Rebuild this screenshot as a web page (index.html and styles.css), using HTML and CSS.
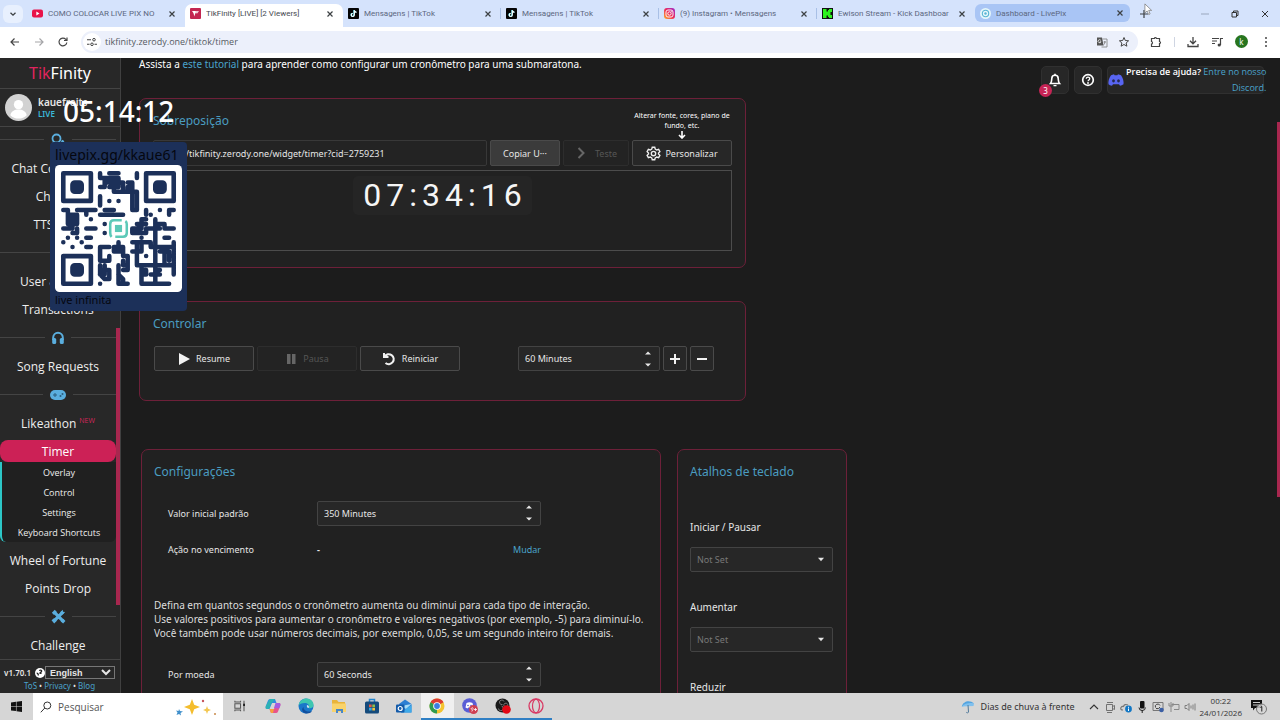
FILE: index.html
```html
<!DOCTYPE html>
<html lang="pt-BR">
<head>
<meta charset="utf-8">
<title>TikFinity [LIVE] [2 Viewers]</title>
<link rel="stylesheet" href="styles.css">
</head>
<body>
<svg class="defs" aria-hidden="true">
  <symbol id="x" viewBox="0 0 8 8"><path d="M1.500 1.500l5 5M6.500 1.500l-5 5" stroke="currentColor" stroke-width="1.200" fill="none"/></symbol>
  <symbol id="tiktok" viewBox="0 0 11 11"><rect width="11" height="11" rx="1" fill="#050505"/><path d="M6 2v4.800a1.500 1.500 0 1 1-1.500-1.500M6 2.200c.3 1.300 1 1.800 2.200 1.900" stroke="#5ef" stroke-width="1.300" fill="none"/><path d="M6.300 2.200v4.800a1.500 1.500 0 1 1-1.500-1.500M6.300 2.400c.3 1.300 1 1.800 2.200 1.900" stroke="#fff" stroke-width="1.200" fill="none"/></symbol>
  <symbol id="spin" viewBox="0 0 6 16"><path d="M0 3.500L3 .5l3 3zM0 12.500l3 3 3-3z" fill="currentColor"/></symbol>
  <symbol id="caret" viewBox="0 0 8 5"><path d="M1 .8h6L4 4.200z" fill="currentColor"/></symbol>
</svg>

<div class="tabstrip">
  <button class="tab-search" aria-label="Pesquisar guias"><svg viewBox="0 0 8 8" width="8" height="8"><path d="M1.500 2.800L4 5.200l2.500-2.400" fill="none" stroke="currentColor" stroke-width="1.300"/></svg></button>
  <div class="tabs">
    <div class="tab"><svg class="fav" viewBox="0 0 11 11"><rect y="1.500" width="11" height="8" rx="2" fill="#e8134a"/><path d="M4.300 3.600v3.800l3.200-1.900z" fill="#fff"/></svg><span class="tab-title">COMO COLOCAR LIVE PIX NO</span><button class="close" aria-label="Fechar"><svg><use href="#x"/></svg></button></div>
    <div class="tab active"><svg class="fav" viewBox="0 0 11 11"><rect width="11" height="11" rx="1" fill="#c32651"/><path d="M2 3h7L7.500 5.200H5.200L4.500 8.500 3.400 5z" fill="#fff"/><path d="M5.500 4h3.800" stroke="#c32651" stroke-width=".5"/></svg><span class="tab-title">TikFinity [LIVE] [2 Viewers]</span><button class="close" aria-label="Fechar"><svg><use href="#x"/></svg></button></div>
    <div class="tab"><svg class="fav"><use href="#tiktok"/></svg><span class="tab-title">Mensagens | TikTok</span><button class="close" aria-label="Fechar"><svg><use href="#x"/></svg></button></div>
    <div class="tab sep"><svg class="fav"><use href="#tiktok"/></svg><span class="tab-title">Mensagens | TikTok</span><button class="close" aria-label="Fechar"><svg><use href="#x"/></svg></button></div>
    <div class="tab sep"><svg class="fav" viewBox="0 0 11 11"><defs><linearGradient id="ig" x1="0" y1="1" x2="1" y2="0"><stop offset="0" stop-color="#fdb12c"/><stop offset=".5" stop-color="#ec2a5a"/><stop offset="1" stop-color="#9a2bd0"/></linearGradient></defs><rect width="11" height="11" rx="3" fill="url(#ig)"/><rect x="2" y="2" width="7" height="7" rx="2" fill="none" stroke="#fff" stroke-width=".9"/><circle cx="5.500" cy="5.500" r="1.700" fill="none" stroke="#fff" stroke-width=".9"/><circle cx="7.700" cy="3.300" r=".5" fill="#fff"/></svg><span class="tab-title">(9) Instagram • Mensagens</span><button class="close" aria-label="Fechar"><svg><use href="#x"/></svg></button></div>
    <div class="tab sep"><svg class="fav" viewBox="0 0 11 11"><rect width="11" height="11" fill="#111"/><path d="M1 1h3.500v2.500H6V2h1V1h3v3H8.500v3H10v3H7V9H6V7.500H4.500V10H1z" fill="#2df21f"/></svg><span class="tab-title">Ewison Stream - Kick Dashboar</span><button class="close" aria-label="Fechar"><svg><use href="#x"/></svg></button></div>
    <div class="tab hover"><svg class="fav" viewBox="0 0 11 11"><circle cx="5.500" cy="5.500" r="5.500" fill="#e5f6fb"/><circle cx="5.500" cy="5.500" r="3.200" fill="none" stroke="#58b5d4" stroke-width="1.100"/><circle cx="5.500" cy="5.500" r="1.200" fill="#58b5d4"/></svg><span class="tab-title">Dashboard - LivePix</span><button class="close" aria-label="Fechar"><svg><use href="#x"/></svg></button></div>
  </div>
  <button class="newtab" aria-label="Nova guia"><svg viewBox="0 0 10 10" width="10" height="10"><path d="M5 1v8M1 5h8" stroke="currentColor" stroke-width="1.200"/></svg></button>
  <div class="winctl">
    <button aria-label="Minimizar"><svg viewBox="0 0 8 8" width="8" height="8"><path d="M0 4h8" stroke="#9aa7bd"/></svg></button>
    <button aria-label="Restaurar"><svg viewBox="0 0 8 8" width="8" height="8"><path d="M1 2.500h4.500V7H1zM2.500 2.500V1H7v4.500H5.500" fill="none" stroke="#333" stroke-width="1"/></svg></button>
    <button aria-label="Fechar janela"><svg viewBox="0 0 8 8" width="8" height="8"><path d="M1 1l6 6M7 1L1 7" stroke="#333" stroke-width="1"/></svg></button>
  </div>
</div>

<div class="toolbar">
  <button class="tb" aria-label="Voltar"><svg viewBox="0 0 12 12"><path d="M10 6H2.500M5.500 2.500L2 6l3.500 3.500" fill="none" stroke="#444" stroke-width="1.200"/></svg></button>
  <button class="tb" aria-label="Avançar"><svg viewBox="0 0 12 12"><path d="M2 6h7.500M6.500 2.500L10 6 6.500 9.500" fill="none" stroke="#a5a5a8" stroke-width="1.200"/></svg></button>
  <button class="tb" aria-label="Recarregar"><svg viewBox="0 0 12 12"><path d="M9.800 6.500A3.900 3.900 0 1 1 8.800 3.300L10 4.500M10 1.500v3H7" fill="none" stroke="#444" stroke-width="1.200"/></svg></button>
  <div class="omnibox">
    <span class="site"><svg viewBox="0 0 10 10" width="10" height="10"><path d="M0 2.700h4M7.500 7.300H10M0 7.300h2.500" stroke="#444" stroke-width="1.100"/><circle cx="7" cy="2.700" r="1.300" fill="none" stroke="#444"/><circle cx="5" cy="7.300" r="1.300" fill="none" stroke="#444"/></svg></span>
    <input class="url" aria-label="Endereço" value="tikfinity.zerody.one/tiktok/timer">
    <button class="tb" aria-label="Traduzir"><svg viewBox="0 0 12 12"><path d="M1 1.500h5l1.500 8H1z" fill="#555"/><path d="M6.500 3H11v8H5.500" fill="none" stroke="#888" stroke-width=".9"/><path d="M4.800 4.300a1.500 1.500 0 1 0 .2 1.500H3.800" stroke="#fff" stroke-width=".8" fill="none"/><path d="M7.500 6h2.500M8.800 5v1c0 1.500-.5 2.500-1.300 3" stroke="#777" stroke-width=".8" fill="none"/></svg></button>
    <button class="tb" aria-label="Favoritos"><svg viewBox="0 0 12 12"><path d="M6 1.500l1.300 3 3.300.3-2.500 2.200.8 3.200L6 8.500l-2.900 1.700.8-3.200L1.400 4.800l3.300-.3z" fill="none" stroke="#444" stroke-width="1"/></svg></button>
  </div>
  <div class="tools">
    <button class="tb" aria-label="Extensões"><svg viewBox="0 0 12 12"><path d="M1.500 2.500h3a1 1 0 0 1 2 0h3v3a1 1 0 0 1 0 2v3h-8V8c1.300 0 1.300-2.500 0-2.500z" fill="none" stroke="#444" stroke-width="1.200"/></svg></button>
    <span class="vr"></span>
    <button class="tb" aria-label="Downloads"><svg viewBox="0 0 12 12"><path d="M6 1v6.500M3 4.800l3 3 3-3M1 8v2.500h10V8" fill="none" stroke="#444" stroke-width="1.300"/></svg></button>
    <button class="tb" aria-label="Mídia"><svg viewBox="0 0 12 12"><path d="M1 2.500h7M1 5h5M1 7.500h3M9.500 9V2.500H12" fill="none" stroke="#444" stroke-width="1.200"/><circle cx="8.200" cy="9" r="1.600" fill="#444"/></svg></button>
    <button class="avatar-k">k</button>
    <button class="tb" aria-label="Menu"><svg viewBox="0 0 12 12" fill="#444"><circle cx="6" cy="2" r="1"/><circle cx="6" cy="6" r="1"/><circle cx="6" cy="10" r="1"/></svg></button>
  </div>
</div>

<div class="app">
  <aside class="sidebar">
    <div class="logo"><span>Tik</span>Finity</div>
    <div class="user">
      <svg viewBox="0 0 28 28" width="27" height="27"><circle cx="14" cy="14" r="14" fill="#d2d2d2"/><circle cx="14" cy="11" r="4.800" fill="#fff"/><path d="M5.500 22c1-8 16-8 17 0a12 12 0 0 1-17 0z" fill="#fff"/></svg>
      <div><b>kauefreits</b><em>LIVE</em></div>
    </div>
    <nav class="nav">
      <div class="divider first"><svg viewBox="0 0 16 14" width="16" height="14"><circle cx="6.500" cy="5.500" r="4" fill="none" stroke="#5aaede" stroke-width="1.800"/><path d="M2 11l1-3 2 2zM10 11a4 4 0 0 0 3 1l1.500.7-.5-2a3 3 0 0 0-2-4" fill="#5aaede"/></svg></div>
      <a href="#">Chat Commands</a>
      <a href="#">Chatbot</a>
      <a href="#">TTS Chat</a>
      <div class="divider"></div>
      <a href="#">User &amp; Points</a>
      <a href="#">Transactions</a>
      <div class="divider"><svg viewBox="0 0 14 14" width="14" height="14"><path d="M2.200 9V6.500a4.800 4.800 0 0 1 9.600 0V9" fill="none" stroke="#5aaede" stroke-width="2"/><rect x="1.200" y="7" width="4" height="6" rx="1.500" fill="#5aaede"/><rect x="8.800" y="7" width="4" height="6" rx="1.500" fill="#5aaede"/></svg></div>
      <a href="#">Song Requests</a>
      <div class="divider"><svg viewBox="0 0 18 14" width="18" height="14"><rect x="1" y="2" width="16" height="10" rx="5" fill="#5aaede"/><path d="M4 7h4M6 5v4" stroke="#2b5d7d" stroke-width="1"/><circle cx="11.500" cy="8" r="1" fill="#2b5d7d"/><circle cx="13.500" cy="6" r="1" fill="#2b5d7d"/></svg></div>
      <a href="#">Likeathon<sup>NEW</sup></a>
      <a href="#" class="current">Timer</a>
      <div class="submenu">
        <a href="#">Overlay</a><a href="#">Control</a><a href="#">Settings</a><a href="#">Keyboard Shortcuts</a>
      </div>
      <a href="#">Wheel of Fortune</a>
      <a href="#">Points Drop</a>
      <div class="divider"><svg viewBox="0 0 14 14" width="15" height="15"><path d="M3 3l8.500 8.500M11 3l-8 8" stroke="#5aaede" stroke-width="3"/><path d="M.8 3.500L3.500.8l2 2-2.700 2.700zM8.500 3L11 .6l.2 2 2 .2-2.400 2.600zM.5 10.500L3 8.500l2.500 2.500-2.500 2.500zM9 11.500L11.500 9l2 2.300-2.200 2.200z" fill="#5aaede"/></svg></div>
      <a href="#">Challenge</a>
    </nav>
    <footer class="side-foot">
      <div class="ver"><b>v1.70.1</b><svg viewBox="0 0 12 12" width="10" height="10"><circle cx="6" cy="6" r="6" fill="#fff"/><path d="M5 3c3-1.500 4 1 2 2s-1 2 1 1M2 6c1 0 2 1 2 3" stroke="#222" stroke-width="1.500" fill="none"/></svg><select aria-label="Language"><option>English</option></select></div>
      <div class="legal"><a href="#">ToS</a> • <a href="#">Privacy</a> • <a href="#">Blog</a></div>
    </footer>
  </aside>

  <main class="main">
    <div class="content">
      <p class="intro">Assista a <a href="#">este tutorial</a> para aprender como configurar um cronômetro para uma submaratona.</p>

      <section class="card overlay-card">
        <div class="card-top"><h2>Sobreposição</h2><p class="hint">Alterar fonte, cores, plano de fundo, etc.<svg viewBox="0 0 8 8" width="8" height="8"><path d="M4 0v6M1 4l3 3 3-3" fill="none" stroke="#fff" stroke-width="1.600"/></svg></p></div>
        <div class="url-row">
          <input class="field" aria-label="URL" value="https://tikfinity.zerody.one/widget/timer?cid=2759231" readonly>
          <button class="btn copy">Copiar U···</button>
          <button class="btn test" disabled><svg viewBox="0 0 12 12" width="12" height="12"><path d="M3.500 1l5 5-5 5" fill="none" stroke="#666" stroke-width="2"/></svg>Teste</button>
          <button class="btn custom"><svg viewBox="0 0 24 24" width="15" height="15" fill="none" stroke="#eee" stroke-width="2.200"><path d="M10 2h4l.8 3 2.400 1.400 3-.9 2 3.500-2.200 2.100v1.800l2.200 2.100-2 3.500-3-.9-2.400 1.400-.8 3h-4l-.8-3-2.400-1.400-3 .9-2-3.500L4 12.900v-1.800L1.800 9l2-3.500 3 .9L9.200 5z"/><circle cx="12" cy="12" r="3.500"/></svg>Personalizar</button>
        </div>
        <div class="preview"><div class="clock"><span>0</span><span>7</span><span>:</span><span>3</span><span>4</span><span>:</span><span>1</span><span>6</span></div></div>
      </section>

      <section class="card control-card">
        <h2>Controlar</h2>
        <div class="control-row">
          <button class="btn ctl"><svg viewBox="0 0 12 12" width="12" height="12"><path d="M1 0l11 6-11 6z" fill="#f2f2f2"/></svg>Resume</button>
          <button class="btn ctl" disabled><svg viewBox="0 0 12 12" width="12" height="12"><path d="M2 1h3.500v10H2zM7 1h3.500v10H7z" fill="#666"/></svg>Pausa</button>
          <button class="btn ctl"><svg viewBox="0 0 14 14" width="14" height="14"><path d="M2.500 4.500h3M2 1v4h4.500M2.500 4.500a5 5 0 1 1 1 6.500" fill="none" stroke="#f2f2f2" stroke-width="2"/></svg>Reiniciar</button>
          <div class="number step"><input aria-label="Tempo" value="60 Minutes"><svg width="6" height="16"><use href="#spin"/></svg></div>
          <button class="btn sq" aria-label="Adicionar"><svg viewBox="0 0 12 12" width="12" height="12"><path d="M6 1v10M1 6h10" stroke="#f2f2f2" stroke-width="2"/></svg></button>
          <button class="btn sq" aria-label="Subtrair"><svg viewBox="0 0 12 12" width="12" height="12"><path d="M1 6h10" stroke="#f2f2f2" stroke-width="2"/></svg></button>
        </div>
      </section>

      <div class="lower">
        <section class="card settings">
          <h2>Configurações</h2>
          <div class="row"><label for="init">Valor inicial padrão</label><div class="number"><input id="init" value="350 Minutes"><svg width="6" height="16"><use href="#spin"/></svg></div></div>
          <div class="row second"><span>Ação no vencimento</span><div class="expiry"><b>-</b><a href="#">Mudar</a></div></div>
          <p class="explain">Defina em quantos segundos o cronômetro aumenta ou diminui para cada tipo de interação.<br>Use valores positivos para aumentar o cronômetro e valores negativos (por exemplo, -5) para diminuí-lo.<br>Você também pode usar números decimais, por exemplo, 0,05, se um segundo inteiro for demais.</p>
          <div class="row"><label for="coin">Por moeda</label><div class="number"><input id="coin" value="60 Seconds"><svg width="6" height="16"><use href="#spin"/></svg></div></div>
        </section>
        <section class="card keys">
          <h2>Atalhos de teclado</h2>
          <label for="k1">Iniciar / Pausar</label>
          <div class="pick"><select id="k1"><option>Not Set</option></select><svg width="8" height="5"><use href="#caret"/></svg></div>
          <label for="k2">Aumentar</label>
          <div class="pick"><select id="k2"><option>Not Set</option></select><svg width="8" height="5"><use href="#caret"/></svg></div>
          <label for="k3">Reduzir</label>
          <div class="pick"><select id="k3"><option>Not Set</option></select><svg width="8" height="5"><use href="#caret"/></svg></div>
        </section>
      </div>
    </div>

    <div class="quick">
      <button class="qbtn" aria-label="Notificações"><svg viewBox="0 0 14 14" width="14" height="14"><path d="M2.500 10.500c1.300-1.500 1-3 1.300-5a3.200 3.200 0 0 1 6.400 0c.3 2 0 3.500 1.300 5z" fill="none" stroke="#fff" stroke-width="1.600"/><path d="M5.500 12h3v1.200h-3zM6.200.8h1.600v2H6.200z" fill="#fff"/></svg><span class="count">3</span></button>
      <button class="qbtn" aria-label="Ajuda"><svg viewBox="0 0 14 14" width="14" height="14"><circle cx="7" cy="7" r="5.300" fill="none" stroke="#fff" stroke-width="1.700"/><path d="M5.300 5.800c0-2.300 3.500-2.200 3.400 0C8.700 7 7 7 7 8.300" fill="none" stroke="#fff" stroke-width="1.300"/><circle cx="7" cy="10" r=".9" fill="#fff"/></svg></button>
      <div class="help"><svg viewBox="0 0 16 12" width="16" height="12"><path d="M3 1.200L6 .3l.6 1h2.800l.6-1 3 .9C15 4 16 7.500 15.500 10.300c-1 .8-2.500 1.300-3.500 1.500l-1-1.500H5l-1 1.500C2.500 11.500 1.300 11 .5 10.300 0 7.500 1 4 3 1.200z" fill="#5865f2"/><ellipse cx="5.500" cy="6.800" rx="1.400" ry="1.600" fill="#252a50"/><ellipse cx="10.500" cy="6.800" rx="1.400" ry="1.600" fill="#252a50"/></svg><p><b>Precisa de ajuda?</b> <a href="#">Entre no nosso<br>Discord.</a></p></div>
    </div>
    <div class="page-scroll"></div>
  </main>

  <div class="stream-clock">05:14:12</div>
  <div class="livepix">
    <div class="lp-url">livepix.gg/kkaue61</div>
    <svg class="qr" viewBox="-1.300 -1.300 27.600 27.600">
      <rect x="-1.300" y="-1.300" width="27.600" height="27.600" rx="1" fill="#fff"/>
      <g fill="none" stroke="#1c3059">
        <path stroke-width="1" stroke-linejoin="round" d="M.5.5h6v6h-6zM18.500.5h6v6h-6zM.5 18.500h6v6h-6z"/>
        <path stroke-width="2" stroke-linejoin="round" d="M3 3h1v1H3zM21 3h1v1h-1zM3 21h1v1H3z"/>
        <path stroke-width=".98" stroke-linecap="round" stroke-linejoin="round" d="M8.500.5v1h1v2h-1M10.500.5h2M9.500 1.500h3v2M16.500.5v1M9.500 2.500h4M10.500 3.500h2M11.500 3.500v1h4M14.500 2.500h1v1h-1v1M15.500 3.500v1h1v4h-1v-4M13.500 2.500v2M8.500 5.500v2M10.500 6.500h.01M12.500 6.500h.01M.5 8.500h1v3M1.500 9.500h2v2h-2M3.500 8.500h4M1.500 10.500h2M2.500 9.500v3M5.500 9.500v-1M9.500 8.500h2M8.500 9.500h5M3.500 12.500v1h-1M.5 12.500h2M6.500 10.500h.01M5.500 12.500h2M9.500 11.500h.01M9.500 13.500h.01M18.500 8.500v1M21.500 8.500h.01M19.500 9.500h.01M24.500 8.500h-1v1M17.500 10.500h1M16.500 11.500h2M17.500 10.500v2h-2v1h3v-1M20.500 10.500v6M20.500 11.500h2v1h2M20.500 12.500h1M18.500 12.500h2M17.500 14.500h.01M22.500 14.500h1M1.500 14.500h.01M3.500 14.500h.01M5.500 14.500h1M.5 15.500h.01M4.500 15.500h.01M2.500 16.500h.01M5.500 16.500h1M12.500 15.500v1M8.500 16.500h2M8.500 16.500v3h2v-1M11.500 16.500h2v1h-2zM13.500 17.500v1h1M15.500 15.500h4v1h5M16.500 15.500v5M15.500 17.500h2v-2M24.500 15.500v6M20.500 16.500v8M21.500 17.500h2v2M22.500 17.500v3h2M23.500 18.500h1M16.500 20.500h8M18.500 18.500h.01M14.500 18.500v3h-1M14.500 20.500h-1v-1M8.500 20.500v2h1v-2M8.500 21.500h2v2M8.500 22.500l1 1h1M12.500 20.500v4M12.500 22.500l1 1v1h1M12.500 24.500h2M8.500 24.500h.01M17.500 20.500v4h6M18.500 21.500v1h-1M17.500 21.500h1M19.500 22.500h2M20.500 21.500h1M24.500 21.500v1"/>
      </g>
      <g fill="none" stroke="#5cc9b8" stroke-width=".55"><path d="M11 14.300q-.3-.3-.3-.9v-1.900q0-.8.8-.8h1.700M14 10.900q.3.200.3.700v1.900q0 .8-.8.800h-1.700"/><rect x="12" y="12" width="1" height="1" fill="#5cc9b8"/></g>
    </svg>
    <div class="lp-msg">live infinita</div>
  </div>
</div>

<div class="taskbar">
  <button class="start" aria-label="Iniciar"><svg viewBox="0 0 12 12" width="11" height="11"><path d="M0 1.600L5.400.9v4.700H0zM6 .8L12 0v5.600H6zM0 6.300h5.400V11L0 10.300zM6 6.300h6V12l-6-.9z" fill="#111"/></svg></button>
  <label class="search"><svg viewBox="0 0 12 12" width="12" height="12"><circle cx="7.300" cy="4.500" r="3.500" fill="none" stroke="#333"/><path d="M4.800 7L.8 11.300" stroke="#333"/></svg><input placeholder="Pesquisar"><svg viewBox="0 0 42 18" width="42" height="18"><path d="M17 1l2.200 5.800L25 9l-5.800 2.200L17 17l-2.200-5.800L9 9l5.800-2.200z" fill="#f4bd2d"/><path d="M32 8l1 2.800 3 1.200-3 1.200-1 2.800-1-2.800-3-1.200 3-1.200z" fill="#f3c750"/><path d="M4 11l1 2 3 .5-2.500 1.500.5 2.500-2-1.500-2.500 1 1-2.500L1 12.500l2.500.5z" fill="#3f8fcb"/><circle cx="28" cy="3" r="1.200" fill="#c6545a"/><circle cx="40" cy="16" r="1" fill="#c98a4a"/></svg></label>
  <div class="apps">
    <button aria-label="Visão de tarefas"><svg viewBox="0 0 14 14"><path d="M2.500 5h5v4h-5zM2.500 2.500v1h5v-1M2.500 11.500v-1h5v1M10.500 2.500v9" fill="none" stroke="#555" stroke-width=".9"/><path d="M9.700 5h1.700v2H9.700z" fill="#222"/></svg></button>
    <button aria-label="Copilot"><svg viewBox="0 0 16 16"><path d="M5 1h5l1.500 4H7L4.500 11H2Q0 11 .8 8L3 2.500Q3.500 1 5 1z" fill="#2e8ee0"/><path d="M5 1h5l-4 5-2 5H2Q0 11 .8 8z" fill="#2cc0a1" opacity=".7"/><path d="M11 15H6l-1.500-4H9l2.500-6H14q2 0 1.200 3L13 13.500Q12.500 15 11 15z" fill="#e8548a"/><path d="M10.500 5H14q2 0 1.200 3l-1 2.500L9 10z" fill="#a55be0"/><path d="M6 15l-1.500-4H9l-1 4z" fill="#f6a13c"/></svg></button>
    <button aria-label="Edge"><svg viewBox="0 0 16 16"><circle cx="8" cy="8" r="7.500" fill="#1a77c9"/><path d="M.6 7.500C1.500 2 6 .5 8.500.5c5 0 7.500 4 7 7-.4 2.500-3 3.200-5 2.500 1.500-2.500-.5-5-3.500-5-3.500 0-5.500 1-6.400 2.500z" fill="#3ec6b0"/><path d="M5.500 9c0 3 3 5.500 8.500 4.200-1 1.300-3 2.300-5.500 2.300C4 15 3 11 5.500 9z" fill="#124f9d"/><path d="M10.500 10c-1.500 0-2-1.500-1.500-3 2 .5 2.500 2 1.500 3z" fill="#d5e5ee"/></svg></button>
    <button aria-label="Explorador"><svg viewBox="0 0 16 16"><path d="M1 2h5l1.500 2H14v10H1z" fill="#e9b43a"/><path d="M1 5.500h14V14H1z" fill="#f9d36b"/><path d="M5 15v-4h7v4h-2v-2H7v2z" fill="#4987c6"/></svg></button>
    <button aria-label="Loja"><svg viewBox="0 0 16 16"><path d="M5.500 4V1.500h5V4" fill="none" stroke="#2085ce" stroke-width="1.500"/><rect x="1" y="3.500" width="14" height="12" rx="1.500" fill="#154b7c"/><path d="M5 6.500h2.700v2.700H5z" fill="#e65a3e"/><path d="M8.300 6.500H11v2.700H8.300z" fill="#8cc14a"/><path d="M5 9.800h2.700v2.700H5z" fill="#34a8e0"/><path d="M8.300 9.800H11v2.700H8.300z" fill="#f5c13a"/></svg></button>
    <button aria-label="Outlook"><svg viewBox="0 0 16 16"><path d="M3 6l6-4.500L15.500 6v8.500H5z" fill="#2c7fd3"/><path d="M5 8l10.500-2L10 11z" fill="#a7dcf7"/><path d="M5 14.500L15.500 7v7.500z" fill="#3faae9"/><rect x="0" y="6.500" width="8.500" height="8" rx="1" fill="#125aa9"/><circle cx="4.200" cy="10.500" r="2" fill="none" stroke="#fff" stroke-width="1.200"/></svg></button>
    <button class="on sel" aria-label="Chrome"><svg viewBox="0 0 16 16"><circle cx="8" cy="8" r="7.500" fill="#f4c430"/><path d="M8 8L1.500 4.250A7.500 7.500 0 0 1 14.500 4.250z" fill="#dc3c32"/><path d="M8 8l0 7.500A7.500 7.500 0 0 1 1.500 4.250z" fill="#2e9b50"/><circle cx="8" cy="8" r="3.800" fill="#fff"/><circle cx="8" cy="8" r="2.900" fill="#3b7de0"/></svg></button>
    <button class="on" aria-label="Discord"><svg viewBox="0 0 16 16"><circle cx="7.500" cy="7.500" r="7.300" fill="#5a5ed6"/><path d="M4.500 5q3-1.500 6 0l1 4.500-2 1-.8-1H6.300l-.8 1-2-1z" fill="#fff"/><circle cx="6" cy="7.500" r=".8" fill="#5a5ed6"/><circle cx="9" cy="7.500" r=".8" fill="#5a5ed6"/><circle cx="11.500" cy="11.500" r="4.500" fill="#cf4052"/><path d="M9.500 11.500a1 1 0 1 1 1.200.2L9.800 13.500M12 11.500h3M13.500 10v3" stroke="#fff" fill="none" stroke-width=".8"/></svg></button>
    <button class="on" aria-label="OBS"><svg viewBox="0 0 16 16"><circle cx="7.500" cy="7.500" r="7" fill="#191919"/><path d="M7.500 6.500a2.300 2.300 0 1 1 1.500-3M6.500 8a2.400 2.400 0 1 1-3 2.500M9 8a2 2 0 1 1 2.500 1" fill="none" stroke="#777" stroke-width="1"/><circle cx="11.500" cy="11.500" r="4.300" fill="#e30915"/></svg></button>
    <button class="on" aria-label="Opera"><svg viewBox="0 0 16 16"><circle cx="8" cy="8" r="7" fill="none" stroke="#d83a64" stroke-width="1.300"/><ellipse cx="8" cy="8" rx="3.500" ry="6.800" fill="none" stroke="#d83a64" stroke-width="1.200"/></svg></button>
  </div>
  <div class="tray">
    <svg viewBox="0 0 14 14" width="14" height="14"><path d="M.8 6.500C2 1.500 8.500-.5 13 3.500L7 5z" fill="#53a4e0"/><path d="M.8 6.500C4 3 9 2.500 13 3.500l-.5 2.500z" fill="#7fc0ee"/><path d="M7 5l.5 7q-1 2-2.200.3" fill="none" stroke="#50799a"/></svg>
    <span class="weather">Dias de chuva à frente</span>
    <div class="sys">
      <svg viewBox="0 0 12 12"><path d="M2 8l4-4 4 4" fill="none" stroke="#333" stroke-width="1.100"/></svg>
      <svg viewBox="0 0 12 12"><path d="M2.500 3.500h6v6h-6zM8.500 5.500l2-1v4l-2-1M3 1.500h6M3 11.500h5" fill="none" stroke="#666" stroke-width=".9"/></svg>
      <svg viewBox="0 0 12 12"><path d="M3 9Q0 9 1 6.500 2 5 3.500 5.500 4.500 2.500 8 4" fill="none" stroke="#777" stroke-width="1.200"/><circle cx="8.500" cy="8" r="3.400" fill="#1277c4"/><path d="M8.500 7.500V10M8.500 5.800v1" stroke="#fff"/></svg>
      <svg viewBox="0 0 12 12"><rect x="4" y="0" width="4.500" height="7.500" rx="1" fill="#111"/><path d="M3 6.500q0 3 3.200 3t3.200-3M6.200 9v3" fill="none" stroke="#222"/></svg>
      <svg viewBox="0 0 12 12"><path d="M1 1.500h10v8H1z" fill="none" stroke="#777"/><path d="M3.500 6.500a2.300 2.300 0 0 1 4.500-2M8 6q-1 2.500-4 1.500" fill="none" stroke="#444"/><circle cx="9.500" cy="9" r="2.300" fill="#3b5fa5"/></svg>
      <svg viewBox="0 0 12 12"><path d="M3.500 3.500H11v5H6M3 1v10M1 2v3h4V2" fill="none" stroke="#888"/></svg>
      <svg viewBox="0 0 12 12"><path d="M1 4.500h2L5 2.500v7L3 7.500H1zM7 4.500v3M9 3.500v5M11 2.500v7" fill="none" stroke="#777" stroke-width=".9"/></svg>
    </div>
    <div class="datetime"><span>00:22</span><span>24/01/2026</span></div>
    <button class="notif" aria-label="Notificações"><svg viewBox="0 0 18 16" width="18" height="16"><path d="M1 1h11v8H5l-2 2.500V9H1z" fill="#111"/><path d="M3 3.500h7M3 6h7" stroke="#ccc"/><circle cx="11.500" cy="10" r="5" fill="#d6d6d6" fill-opacity=".8" stroke="#777"/><path d="M10.500 8.500l1.300-1v5" stroke="#222" fill="none"/></svg></button>
  </div>
</div>

<svg class="cursor" viewBox="0 0 10 14" width="9" height="13"><path d="M1 .8v10l2.500-2.200 1.700 4 1.600-.7L5.200 8H8.500z" fill="#fff" stroke="#777" stroke-width=".8"/></svg>
</body>
</html>
```
FILE: styles.css
```css
* { box-sizing: border-box; }
body {
  margin: 0;
  height: 100vh;
  display: flex;
  flex-direction: column;
  overflow: hidden;
  font-family: "Noto Sans", "Open Sans", sans-serif;
  font-size: 10px;
  color: #e6e6e6;
  background: #1c1c1c;
}
button, input, select { font: inherit; color: inherit; margin: 0; padding: 0; }
button { border: 0; background: none; display: flex; align-items: center; justify-content: center; }
a { color: #4aa3cc; text-decoration: none; }
svg { flex: none; }
p, h2 { margin: 0; }
.defs { position: absolute; width: 0; height: 0; }

/* browser tabs */
.tabstrip { flex: none; height: 27px; display: flex; align-items: center; background: #d5e3fc; color: #3c4043; }
.tab-search { width: 20px; height: 18px; margin: 0 4px 0 3px; border-radius: 6px; background: #e8f0fe; }
.tabs { flex: 0 1 1103px; display: flex; align-self: stretch; padding-top: 4px; }
.tab { flex: 1 1 0; min-width: 0; display: flex; align-items: center; gap: 5px; padding: 0 9px 4px 5px; position: relative; }
.tab.active { background: #fff; border-radius: 7px 7px 0 0; }
.tab.hover { background: #a9c5f5; border-radius: 6px; height: 18px; padding-bottom: 0; padding-right: 6px; }
.tab.sep::before { content: ""; width: 1px; height: 11px; background: #a9c0e6; position: absolute; left: -1px; }
.fav { width: 11px; height: 11px; }
.tab-title { flex: 1; min-width: 0; overflow: hidden; white-space: nowrap; font-family: Roboto, sans-serif; font-size: 8px; color: #5c6780; }
.active .tab-title { color: #454950; }
.close svg { width: 8px; height: 8px; display: block; }
.newtab { width: 20px; height: 20px; margin-left: 4px; }
.winctl { margin-left: auto; display: flex; }
.winctl button { width: 30px; height: 20px; }

/* address bar */
.toolbar { flex: none; height: 31px; display: flex; align-items: center; gap: 12px; padding: 0 8px 2px 9px; background: #fff; color: #3c4043; }
.tb { width: 12px; height: 12px; }
.tb svg { width: 12px; height: 12px; }
.omnibox { flex: 1; height: 22px; display: flex; align-items: center; gap: 10px; padding: 0 8px 0 2px; border-radius: 11px; background: #ecf0fb; }
.site { width: 18px; height: 18px; border-radius: 50%; background: #fff; display: flex; align-items: center; justify-content: center; margin-right: -6px; }
.url { flex: 1; border: 0; background: none; font-family: "Open Sans", sans-serif; font-size: 9px; outline: 0; color: #555a62; }
.tools { display: flex; align-items: center; gap: 12px; }
.vr { width: 1px; height: 10px; background: #cfd5e2; }
.avatar-k { width: 13px; height: 13px; border-radius: 50%; background: #27751f; color: #fff; font-size: 8px; }

/* app shell */
.app { flex: 1; min-height: 0; display: flex; position: relative; }
.sidebar { flex: none; width: 121px; display: flex; flex-direction: column; background: #282828; border-right: 1px solid #404040; }
.logo { height: 31px; display: flex; align-items: center; justify-content: center; font-size: 16px; color: #fff; border-bottom: 1px solid #444; }
.logo span { color: #e0245e; }
.user { height: 38px; display: flex; align-items: center; gap: 6px; padding-left: 5px; border-bottom: 1px solid #444; }
.user b, .user em { display: block; line-height: 12px; }
.user b { font-size: 10px; font-weight: 600; }
.user em { font-size: 8px; font-style: normal; font-weight: 600; color: #3bb8d8; }
.nav { flex: 1; min-height: 0; overflow: hidden; position: relative; padding-right: 4px; }
.nav::after { content: ""; position: absolute; right: 0; top: 201px; width: 4px; height: 277px; background: #a8274f; }
.nav a { height: 28px; display: flex; align-items: center; justify-content: center; color: #eee; font-family: "Open Sans", sans-serif; font-size: 12px; white-space: nowrap; }
.nav sup { font-size: 7px; color: #d4265b; margin: -6px 0 0 3px; }
.divider { height: 29px; display: flex; align-items: center; justify-content: center; gap: 6px; }
.divider::before, .divider::after { content: ""; flex: 1; height: 1px; background: #444; }
.divider.first { height: 27px; padding-bottom: 2px; }
.nav .current { height: 22px; margin: 3px 0 0; border-radius: 8px; background: #cc2156; color: #fff; }
.submenu { margin-bottom: 4px; background: #202020; border-left: 2px solid #2cc6c6; border-radius: 0 0 6px 6px; }
.nav .submenu a { height: 20px; font-size: 9px; font-weight: 500; }
.side-foot { border-top: 1px solid #444; height: 34px; padding: 6px 5px 0 4px; }
.ver { display: flex; align-items: center; gap: 4px; font-size: 8px; }
.ver b { font-weight: 600; }
.ver select { flex: 1; min-width: 0; height: 13px; background: #282828; border: 1px solid #777; font-family: "Liberation Sans", sans-serif; font-size: 9px; font-weight: 700; margin-left: -4px; }
.legal { text-align: center; font-size: 8px; line-height: 13px; }

.main { flex: 1; min-width: 0; display: flex; justify-content: space-between; padding: 0 16px 0 18px; position: relative; overflow: hidden; }
.content { flex: 0 1 708px; }
.intro { font-size: 10px; line-height: 12px; white-space: nowrap; color: #fff; }
.card { background: #212121; border: 1px solid #6d2039; border-radius: 7px; padding: 12px 13px; }
.card h2 { font-size: 12px; line-height: 20px; font-weight: 400; color: #4a9cc0; }
.overlay-card, .control-card { width: 607px; max-width: 100%; }
.overlay-card { margin-top: 28px; height: 170px; }
.card-top { display: flex; justify-content: space-between; height: 29px; }
.hint { width: 100px; text-align: center; font-size: 7px; line-height: 10px; color: #fff; }
.hint svg { display: block; margin: 0 auto; }
.url-row { display: flex; gap: 3px; height: 26px; }
.field, .number { background: #272727; border: 1px solid #434343; border-radius: 2px; }
.field { flex: 1; min-width: 0; padding-left: 4px; font-size: 9px; background: #232323; border-color: #383838; }
.btn { gap: 8px; border: 1px solid #4a4a4a; border-radius: 2px; background: #272727; font-size: 9px; color: #e6e6e6; }
.btn:disabled { background: #232323; border-color: #2d2d2d; color: #555; }
.copy { width: 70px; background: #3b3b3b; }
.test { width: 66px; }
.custom { width: 100px; gap: 4px; }
.preview { margin-top: 4px; height: 81px; border: 1px solid #4c4c4c; display: flex; justify-content: center; align-items: flex-start; padding-top: 5px; }
.clock { display: flex; gap: 5px; height: 39px; align-items: center; padding: 0 10px 2px; border-radius: 5px; background: #252525; font-family: Roboto, sans-serif; font-size: 32px; color: #f5f5f5; }
.control-card { margin-top: 33px; height: 100px; }
.control-row { display: flex; gap: 3px; margin-top: 12px; height: 25px; padding-left: 1px; }
.ctl { width: 100px; gap: 6px; }
.number { position: relative; width: 224px; height: 25px; display: flex; align-items: center; padding: 0 8px 0 6px; }
.number input { flex: 1; min-width: 0; border: 0; background: none; outline: 0; font-size: 9px; }
.number.step { width: 142px; margin-left: 55px; }
.sq { width: 24px; }
.lower { display: flex; gap: 16px; margin: 48px 0 0 2px; }
.lower .card { padding-left: 12px; }
.settings { flex: 0 1 520px; height: 300px; }
.keys { flex: 0 1 170px; }
.row { display: flex; align-items: center; height: 36px; padding-left: 14px; font-size: 9px; }
.row > :first-child { width: 149px; }
.settings h2 + .row { margin-top: 13px; }
.expiry { width: 224px; display: flex; justify-content: space-between; }
.explain { margin: 31px 0 16px; font-size: 10px; line-height: 14px; white-space: nowrap; color: #ddd; }
.keys label { display: block; font-size: 10px; line-height: 14px; }
.keys h2 { margin-bottom: 38px; white-space: nowrap; }
.pick { position: relative; height: 25px; margin: 13px 0 28px; }
.pick select { width: 100%; height: 100%; appearance: none; padding-left: 6px; font-size: 9px; color: #777; background: #272727; border: 1px solid #434343; border-radius: 2px; }
.pick svg { position: absolute; right: 8px; top: 10px; }

.quick { display: flex; gap: 5px; margin-top: 8px; height: 28px; }
.qbtn { width: 28px; height: 28px; border-radius: 5px; background: #272727; border: 1px solid #303030; position: relative; }
.count { position: absolute; left: -3px; bottom: -4px; width: 13px; height: 13px; border-radius: 50%; background: #c62455; color: #fff; font-size: 8px; line-height: 13px; }
.help { width: 157px; display: flex; align-items: center; gap: 2px; border-radius: 4px; background: #262626; border: 1px solid #303030; text-align: right; font-family: "Open Sans", sans-serif; font-size: 9px; line-height: 16px; white-space: nowrap; }
.help p { flex: 1; }
.help b { font-weight: 600; color: #fff; }
.page-scroll { position: absolute; right: 0; top: 64px; width: 3px; height: 375px; background: #a8274f; }

/* stream overlays */
.stream-clock { position: absolute; left: 63px; top: 34px; font-size: 28px; line-height: 38px; font-weight: 500; color: #fff; }
.livepix { position: absolute; left: 50px; top: 84px; width: 137px; height: 169px; padding: 3px 5px; border-radius: 4px; background: #1c3059; color: #05070f; }
.lp-url { font-size: 14px; line-height: 20px; white-space: nowrap; }
.qr { display: block; width: 127px; height: 127px; }
.lp-msg { font-size: 11px; line-height: 16px; }
.cursor { position: absolute; left: 1144px; top: 3px; }

/* taskbar */
.taskbar { flex: none; height: 27px; display: flex; align-items: stretch; background: #d6d6d6; color: #333; }
.start { width: 33px; }
.search { width: 190px; background: #fff; display: flex; align-items: center; gap: 6px; padding: 0 6px 0 7px; }
.search input { flex: 1; min-width: 0; border: 0; outline: 0; font-family: "Open Sans", sans-serif; font-size: 10px; }
.search input::placeholder { color: #555; opacity: 1; }
.apps { display: flex; flex: 0 1 328px; margin-left: 1px; }
.apps button { flex: 1; border-bottom: 2px solid transparent; }
.apps svg { width: 16px; height: 16px; }
.apps .on { border-bottom-color: #2f7fc4; }
.apps .sel { background-color: #f0f0f0; }
.tray { margin-left: auto; display: flex; align-items: center; gap: 6px; padding-right: 12px; }
.weather { font-size: 9px; }
.sys { display: flex; gap: 4px; margin-left: 7px; }
.sys svg { width: 12px; height: 12px; }
.datetime { display: flex; flex-direction: column; align-items: center; font-family: "Open Sans", sans-serif; font-size: 8px; line-height: 12px; margin-left: -2px; }
.notif { margin-left: 2px; }
```
